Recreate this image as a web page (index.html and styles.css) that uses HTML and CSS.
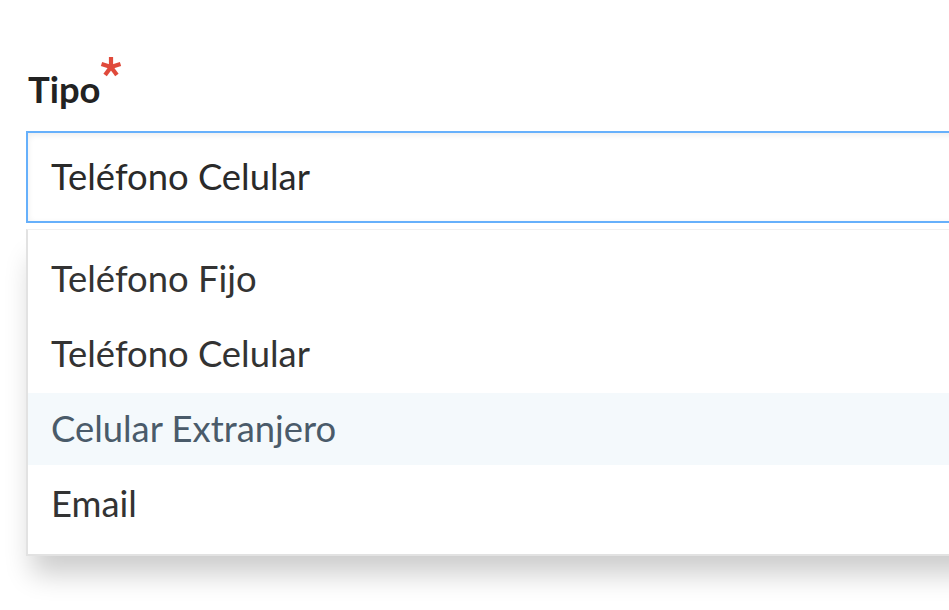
FILE: index.html
```html
<!DOCTYPE html>
<html lang="es">
<head>
<meta charset="utf-8">
<title>Tipo</title>
<link rel="stylesheet" href="styles.css">
</head>
<body>
<div class="field">
  <label class="label">Tipo<svg class="req" width="22" height="22" viewBox="-11 -11 22 22" aria-hidden="true"><g stroke="#e04a3b" stroke-width="4.2" stroke-linecap="butt"><line x1="0" y1="0" x2="0" y2="-10"/><line x1="0" y1="0" x2="9.5" y2="-3.1"/><line x1="0" y1="0" x2="5.9" y2="8.1"/><line x1="0" y1="0" x2="-5.9" y2="8.1"/><line x1="0" y1="0" x2="-9.5" y2="-3.1"/></g></svg></label>
  <div class="input">Teléfono Celular</div>
  <ul class="dropdown">
    <li class="item">Teléfono Fijo</li>
    <li class="item">Teléfono Celular</li>
    <li class="item hover">Celular Extranjero</li>
    <li class="item">Email</li>
  </ul>
</div>
</body>
</html>
```
FILE: styles.css
```css
html {
  margin: 0;
  padding: 0;
  background: #ffffff;
  overflow: hidden;
}
body {
  margin: 0;
  padding: 0;
  min-height: 610px;
  font-family: "Lato", "Noto Sans", sans-serif;
  color: #333333;
}
.field {
  padding: 56px 0 0 26px;
  width: 1000px;
}
.label {
  display: block;
  font-weight: 700;
  font-size: 36.4px;
  line-height: 60px;
  height: 60px;
  color: #222222;
  padding-left: 2px;
  margin-bottom: 15px;
}
.req {
  vertical-align: 25px;
  margin-left: -1px;
}
.input {
  box-sizing: border-box;
  height: 92px;
  border: 2px solid #66b0fb;
  box-shadow: inset 0 2px 6px rgba(0, 0, 0, 0.08);
  font-size: 36.4px;
  line-height: 86px;
  padding-left: 23px;
  color: #2a2a2a;
}
.dropdown {
  list-style: none;
  margin: 6px 0 0 0;
  padding: 13px 0 14px 0;
  border: 2px solid #e2e2e2;
  border-top: 1px solid #f0f0f0;
  border-right: none;
  display: flex;
  flex-direction: column;
  gap: 3px;
  box-shadow: 0 24px 26px -6px rgba(0, 0, 0, 0.2);
  background: #ffffff;
}
.item {
  height: 72px;
  line-height: 70px;
  font-size: 36.4px;
  padding-left: 23px;
  color: #333333;
}
.item.hover {
  background: #f4f9fc;
  color: #4a5b6a;
}
```
